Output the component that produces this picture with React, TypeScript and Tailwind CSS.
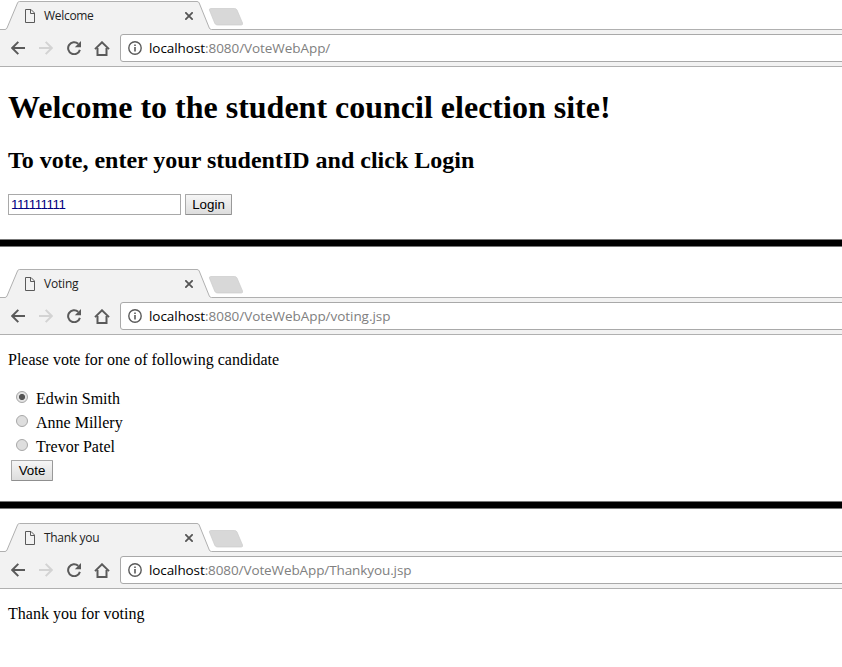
import { useState } from "react";

function PageIcon() {
  return (
    <svg className="block h-[14px] w-[10px]" viewBox="0 0 10 14" fill="none" stroke="#5a5a5a">
      <path d="M.5 .5H6L9.5 4V13.5H.5Z" />
      <path d="M5.5 .5V4.5H9.5" />
    </svg>
  );
}

function BackIcon({ className }: { className: string }) {
  return (
    <svg className={className} viewBox="0 0 14 14" fill="none" stroke="currentColor" strokeWidth="2">
      <path d="M14 7H1.5M7.3 .9L1.2 7L7.3 13.1" />
    </svg>
  );
}

function ReloadIcon() {
  return (
    <svg className="block size-[14px] text-[#5a5a5a]" viewBox="0 0 14 14" fill="none">
      <path d="M12.9 8.9A6 6 0 1 1 11.2 2.8" stroke="currentColor" strokeWidth="2" />
      <path d="M14 0V6.2H7.8Z" fill="currentColor" />
    </svg>
  );
}

function HomeIcon() {
  return (
    <svg className="block h-[15px] w-[16px]" viewBox="0 0 16 15" fill="none" stroke="#5a5a5a" strokeWidth="2">
      <path d="M1 8.1L8 1.3L15 8.1" />
      <path d="M3.5 7V14H12.5V7" />
    </svg>
  );
}

function InfoIcon() {
  return (
    <svg className="block size-[14px]" viewBox="0 0 14 14" fill="none" stroke="#5a5a5a">
      <circle cx="7" cy="7" r="6.2" strokeWidth="1.4" />
      <path d="M7 6V10.5M7 3.5V5" strokeWidth="1.6" />
    </svg>
  );
}

type ChromeProps = { title: string; titleClass: string; path: string; pathClass: string };

function BrowserChrome({ title, titleClass, path, pathClass }: ChromeProps) {
  return (
    <header className="h-[67px] font-['Open_Sans','Noto_Sans',sans-serif]">
      <div className="relative flex h-[30px] items-center">
        <svg className="absolute inset-0 h-[30px] w-full" fill="none">
          <path d="M0 29.5H5Q6.3 29.5 7 28L17.6 2.8Q18.2 1.5 19.5 1.5H197Q198.6 1.5 199.2 3L209.3 28Q210 29.5 211.5 29.5H842V31H0Z" fill="#f2f2f2" />
          <path d="M0 29.5H5Q6.3 29.5 7 28L17.6 2.8Q18.2 1.5 19.5 1.5H197Q198.6 1.5 199.2 3L209.3 28Q210 29.5 211.5 29.5H842" stroke="#b0b0b0" />
          <path d="M211 8.5H234.5Q236.3 8.5 237 10L242.5 23Q243 25 241.3 25H217.5Q215.5 25 214.8 23.3L209.4 10Q209 8.5 211 8.5Z" fill="#d8d8d8" stroke="#cbcbcb" strokeWidth=".7" />
        </svg>
        <div className="relative flex h-full w-[200px] items-center pt-[2px] pl-[25px]">
          <PageIcon />
          <span className={`ml-[9px] text-[12px] leading-4 text-[#222] ${titleClass}`}>{title}</span>
          <svg className="mr-[7px] ml-auto block size-[8px]" viewBox="0 0 8 8" stroke="#555" strokeWidth="1.8">
            <path d="M.3 .3L7.7 7.7M7.7 .3L.3 7.7" />
          </svg>
        </div>
      </div>
      <div className="flex h-[37px] items-center overflow-hidden border-b border-[#b0b0b0] bg-[#f2f2f2] pl-[11px]">
        <BackIcon className="block size-[14px] text-[#5a5a5a]" />
        <BackIcon className="ml-[14px] block size-[14px] rotate-180 text-[#d3d3d3]" />
        <div className="ml-[14px]">
          <ReloadIcon />
        </div>
        <div className="ml-[13px]">
          <HomeIcon />
        </div>
        <div className="-mr-1 ml-[10px] flex h-[28px] flex-1 items-center rounded-[3px] border border-[#a9a9a9] bg-white pl-[7px]">
          <InfoIcon />
          <span className={`ml-[7px] text-[13.5px] leading-5 whitespace-nowrap text-[#808080] ${pathClass}`}>
            <span className="text-black">localhost</span>
            {path}
          </span>
        </div>
      </div>
    </header>
  );
}

const buttonClass =
  "block h-[21px] border border-[#a9a9a9] border-r-[#999] border-b-[#8f8f8f] rounded-[1px] bg-linear-to-b from-[#f6f6f6] to-[#dddddd] p-0 text-center font-['Liberation_Sans',Arial,sans-serif] text-[13.333px] leading-[19px] text-black";

function Divider() {
  return <div className="h-[8px] border-y border-[#777] bg-black" />;
}

const candidates = ["Edwin Smith", "Anne Millery", "Trevor Patel"];

export default function App() {
  const [id, setId] = useState("111111111");
  const [choice, setChoice] = useState(0);

  return (
    <div className="h-[667px] w-[842px] overflow-hidden bg-white font-['Liberation_Serif','Times_New_Roman',serif] text-[16px] leading-[18px] text-black">
      <section className="h-[239px]">
        <BrowserChrome title="Welcome" titleClass="tracking-[-0.3px]" path=":8080/VoteWebApp/" pathClass="tracking-[-0.06px]" />
        <main className="px-2 pt-[22px]">
          <h1 className="text-[32px] leading-[37px] font-bold">Welcome to the student council election site!</h1>
          <h2 className="mt-[21px] text-[24px] leading-[27px] font-bold">To vote, enter your studentID and click Login</h2>
          <form className="mt-[20px] flex gap-1" onSubmit={(e) => e.preventDefault()}>
            <input
              className="block h-[21px] w-[173px] border border-[#a9a9a9] bg-white px-[2px] font-['Liberation_Sans',Arial,sans-serif] text-[13.333px] tracking-[-0.5px] text-[#000080] outline-none"
              value={id}
              onChange={(e) => setId(e.target.value)}
            />
            <button className={`${buttonClass} w-[47px]`}>Login</button>
          </form>
        </main>
      </section>
      <Divider />
      <section className="h-[254px] pt-[21px]">
        <BrowserChrome title="Voting" titleClass="tracking-[-0.2px]" path=":8080/VoteWebApp/voting.jsp" pathClass="tracking-[-0.05px]" />
        <main className="px-2 pt-[16px]">
          <p>Please vote for one of following candidate</p>
          <div className="mt-[18px]">
            {candidates.map((name, i) => (
              <label key={name} className="flex h-[24px] items-center pl-2">
                <input
                  type="radio"
                  name="candidate"
                  className="relative -top-[2px] m-0 size-[12px] appearance-none rounded-full border border-[#a8a8a8] bg-[#dedede] checked:bg-[radial-gradient(circle,#555_0_2.7px,#e3e3e3_3.4px)]"
                  checked={choice === i}
                  onChange={() => setChoice(i)}
                />
                <span className="ml-2">{name}</span>
              </label>
            ))}
          </div>
          <button className={`${buttonClass} mt-[1px] ml-[3px] w-[42px]`}>Vote</button>
        </main>
      </section>
      <Divider />
      <section className="pt-[13px]">
        <BrowserChrome title="Thank you" titleClass="tracking-[-0.3px]" path=":8080/VoteWebApp/Thankyou.jsp" pathClass="tracking-[-0.1px]" />
        <main className="px-2 pt-[16px]">
          <p>Thank you for voting</p>
        </main>
      </section>
    </div>
  );
}
